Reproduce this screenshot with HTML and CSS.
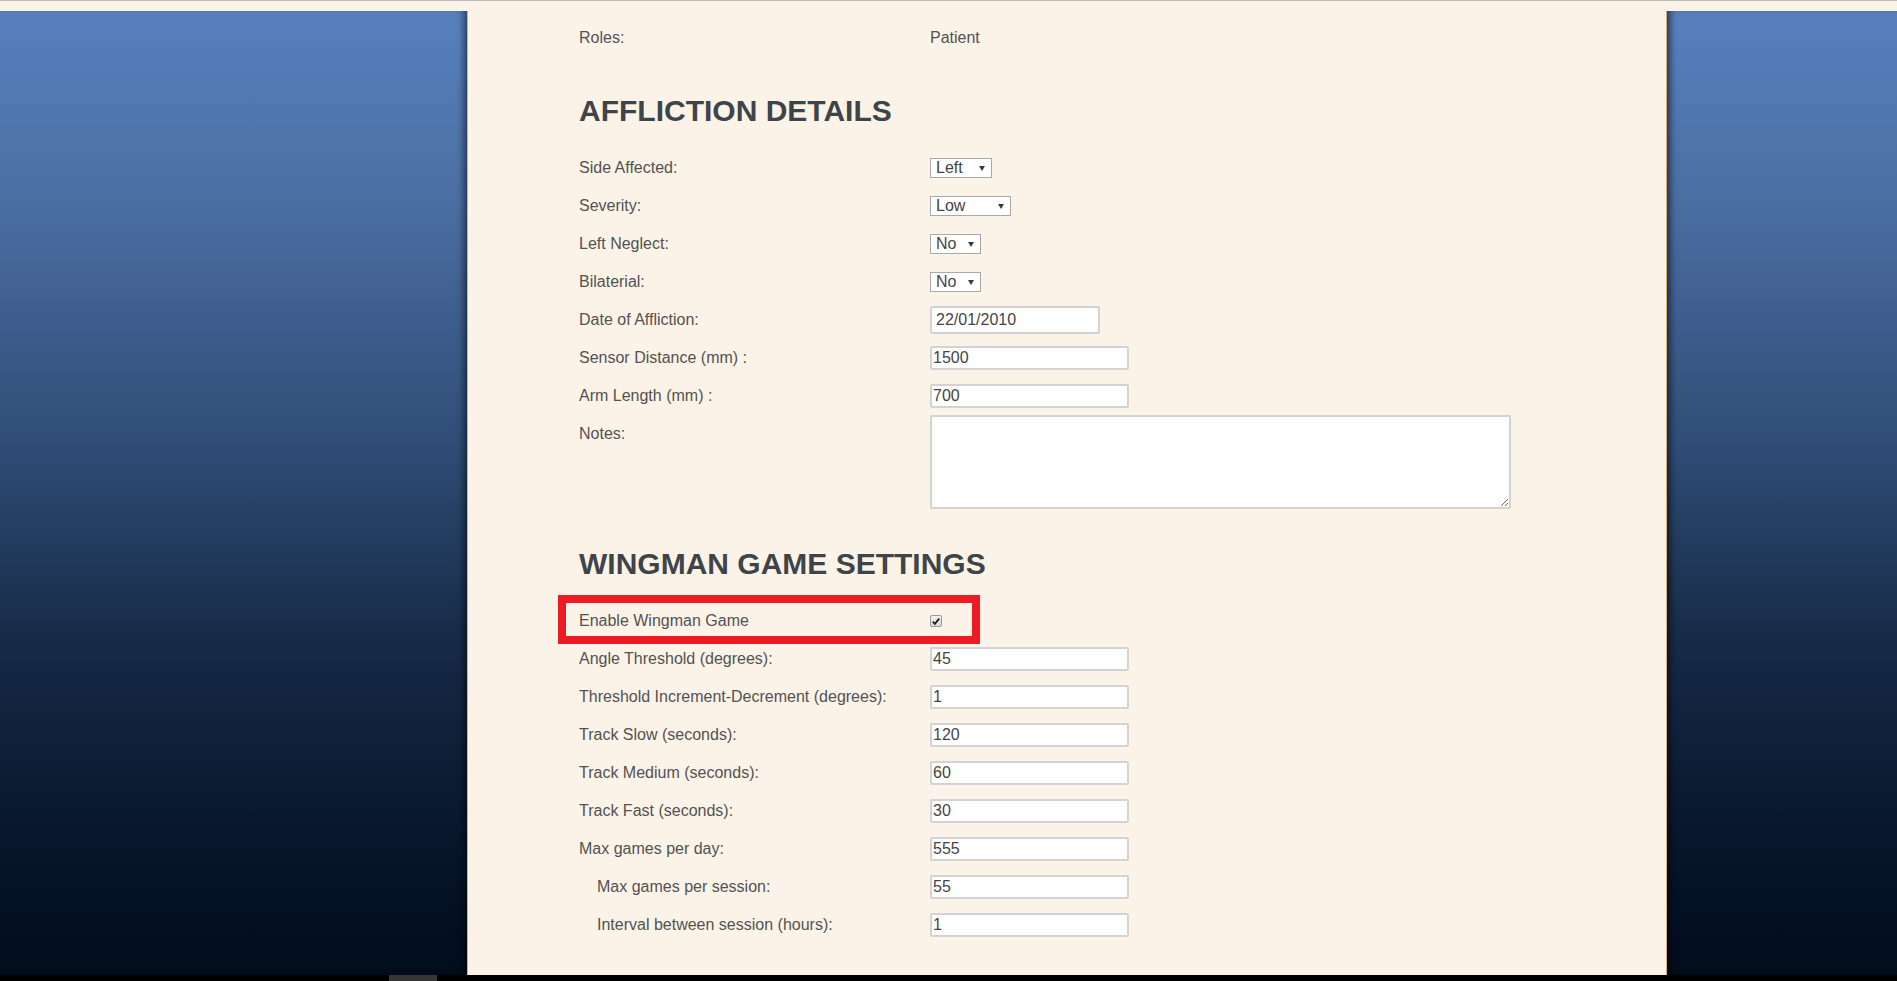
FILE: index.html
```html
<!DOCTYPE html>
<html lang="en">
<head>
<meta charset="utf-8">
<title>Patient settings</title>
<link rel="stylesheet" href="styles.css">
</head>
<body>
<div class="topline"></div>
<div class="stage">
  <aside class="side side-left"></aside>
  <main class="panel">
    <div class="row">
      <span class="lbl">Roles:</span>
      <span class="val">Patient</span>
    </div>

    <h2 class="section-title section-first">AFFLICTION DETAILS</h2>

    <div class="row">
      <label class="lbl">Side Affected:</label>
      <span class="selwrap"><select class="sel sel-side"><option>Left</option><option>Right</option></select></span>
    </div>
    <div class="row">
      <label class="lbl">Severity:</label>
      <span class="selwrap"><select class="sel sel-sev"><option>Low</option><option>Medium</option><option>High</option></select></span>
    </div>
    <div class="row">
      <label class="lbl">Left Neglect:</label>
      <span class="selwrap"><select class="sel sel-yn"><option>No</option><option>Yes</option></select></span>
    </div>
    <div class="row">
      <label class="lbl">Bilaterial:</label>
      <span class="selwrap"><select class="sel sel-yn"><option>No</option><option>Yes</option></select></span>
    </div>
    <div class="row">
      <label class="lbl">Date of Affliction:</label>
      <input class="inp inp-date" type="text" value="22/01/2010">
    </div>
    <div class="row">
      <label class="lbl">Sensor Distance (mm) :</label>
      <input class="inp" type="text" value="1500">
    </div>
    <div class="row">
      <label class="lbl">Arm Length (mm) :</label>
      <input class="inp" type="text" value="700">
    </div>
    <div class="row row-top">
      <label class="lbl">Notes:</label>
      <textarea class="notes"></textarea>
    </div>

    <h2 class="section-title">WINGMAN GAME SETTINGS</h2>

    <div class="row row-flag">
      <span class="highlight"></span>
      <label class="lbl">Enable Wingman Game</label>
      <span class="chk"><svg width="11" height="11" viewBox="0 0 11 11"><path d="M2 5.6 L4.3 8 L9 2.4" fill="none" stroke="#1e1e1e" stroke-width="2"/></svg></span>
    </div>
    <div class="row">
      <label class="lbl">Angle Threshold (degrees):</label>
      <input class="inp" type="text" value="45">
    </div>
    <div class="row">
      <label class="lbl">Threshold Increment-Decrement (degrees):</label>
      <input class="inp" type="text" value="1">
    </div>
    <div class="row">
      <label class="lbl">Track Slow (seconds):</label>
      <input class="inp" type="text" value="120">
    </div>
    <div class="row">
      <label class="lbl">Track Medium (seconds):</label>
      <input class="inp" type="text" value="60">
    </div>
    <div class="row">
      <label class="lbl">Track Fast (seconds):</label>
      <input class="inp" type="text" value="30">
    </div>
    <div class="row">
      <label class="lbl">Max games per day:</label>
      <input class="inp" type="text" value="555">
    </div>
    <div class="row">
      <label class="lbl lbl-sub">Max games per session:</label>
      <input class="inp" type="text" value="55">
    </div>
    <div class="row">
      <label class="lbl lbl-sub">Interval between session (hours):</label>
      <input class="inp" type="text" value="1">
    </div>
  </main>
  <aside class="side side-right"></aside>
</div>
<div class="bottombar"><div class="thumb"></div></div>
</body>
</html>
```

FILE: styles.css
```css
html, body {
  margin: 0;
  padding: 0;
  height: 100%;
  overflow: hidden;
}

body {
  background: #fcf3e8;
  font-family: "Liberation Sans", Arial, sans-serif;
  font-size: 16px;
  color: #525252;
}

.topline {
  height: 1px;
  background: #b9b6b3;
}

.stage {
  margin-top: 10px;
  height: 964px;
  display: flex;
}

.side {
  flex: none;
  background: linear-gradient(to bottom, #5781be 0%, #4b6ea2 20%, #2f4d77 45%, #172b47 65%, #08172d 85%, #010c1c 100%);
}

.side-left {
  width: 467px;
  box-shadow: inset -7px 0 7px -4px rgba(0, 0, 0, 0.55);
}

.side-right {
  flex: 1;
  box-shadow: inset 7px 0 7px -4px rgba(0, 0, 0, 0.6);
}

.panel {
  width: 1200px;
  flex: none;
  box-sizing: border-box;
  padding: 8px 0 0 111px;
  background: #fcf3e8;
  border-left: 1px solid #d9b07a;
  border-right: 1px solid #d9b07a;
}

.row {
  position: relative;
  display: flex;
  align-items: center;
  height: 38px;
}

.row-top {
  align-items: flex-start;
  height: auto;
}

.lbl {
  width: 351px;
  flex: none;
  box-sizing: border-box;
  line-height: 38px;
  color: #525252;
}

.lbl-sub {
  padding-left: 18px;
}

.val {
  color: #525252;
}

.section-title {
  margin: 37px 0 20px;
  font-size: 30px;
  line-height: 36px;
  font-weight: bold;
  color: #3f4449;
}

.section-first {
  margin-top: 36px;
}

.selwrap {
  position: relative;
  display: inline-block;
  height: 20px;
}

.selwrap::after {
  content: "";
  position: absolute;
  right: 7px;
  top: 8px;
  border-left: 3px solid transparent;
  border-right: 3px solid transparent;
  border-top: 5px solid #3a3a3a;
  pointer-events: none;
}

.sel {
  -webkit-appearance: none;
  appearance: none;
  box-sizing: border-box;
  height: 20px;
  margin: 0;
  padding: 0 0 0 5px;
  border: 1px solid #a9a9a9;
  border-radius: 0;
  background: #ffffff;
  font-family: "Liberation Sans", Arial, sans-serif;
  font-size: 16px;
  line-height: 18px;
  color: #444;
}

.sel-side { width: 62px; }
.sel-sev { width: 81px; }
.sel-yn { width: 51px; }

.inp {
  box-sizing: border-box;
  width: 199px;
  height: 24px;
  margin: 0;
  padding: 0 1px;
  border: 2px solid #d3d3d3;
  border-radius: 2px;
  background: #ffffff;
  font-family: "Liberation Sans", Arial, sans-serif;
  font-size: 16px;
  color: #444;
}

.inp-date {
  width: 170px;
  height: 28px;
  padding: 0 4px;
}

.notes {
  box-sizing: border-box;
  width: 581px;
  height: 94px;
  margin: 0;
  padding: 2px;
  border: 2px solid #d3d3d3;
  border-radius: 2px;
  background: #ffffff;
  font-family: "Liberation Sans", Arial, sans-serif;
  font-size: 16px;
}

.chk {
  box-sizing: border-box;
  width: 12px;
  height: 12px;
  display: flex;
  align-items: center;
  justify-content: center;
  border: 1px solid #9a9a9a;
  border-radius: 2px;
  background: linear-gradient(to bottom, #f2f2f2, #d9d9d9);
}

.highlight {
  position: absolute;
  left: -21px;
  top: -7px;
  width: 422px;
  height: 49px;
  box-sizing: border-box;
  border: 8px solid #ed1c24;
  pointer-events: none;
}

.bottombar {
  height: 6px;
  background: #000000;
}

.thumb {
  margin-left: 389px;
  width: 48px;
  height: 6px;
  background: #363636;
}
```
